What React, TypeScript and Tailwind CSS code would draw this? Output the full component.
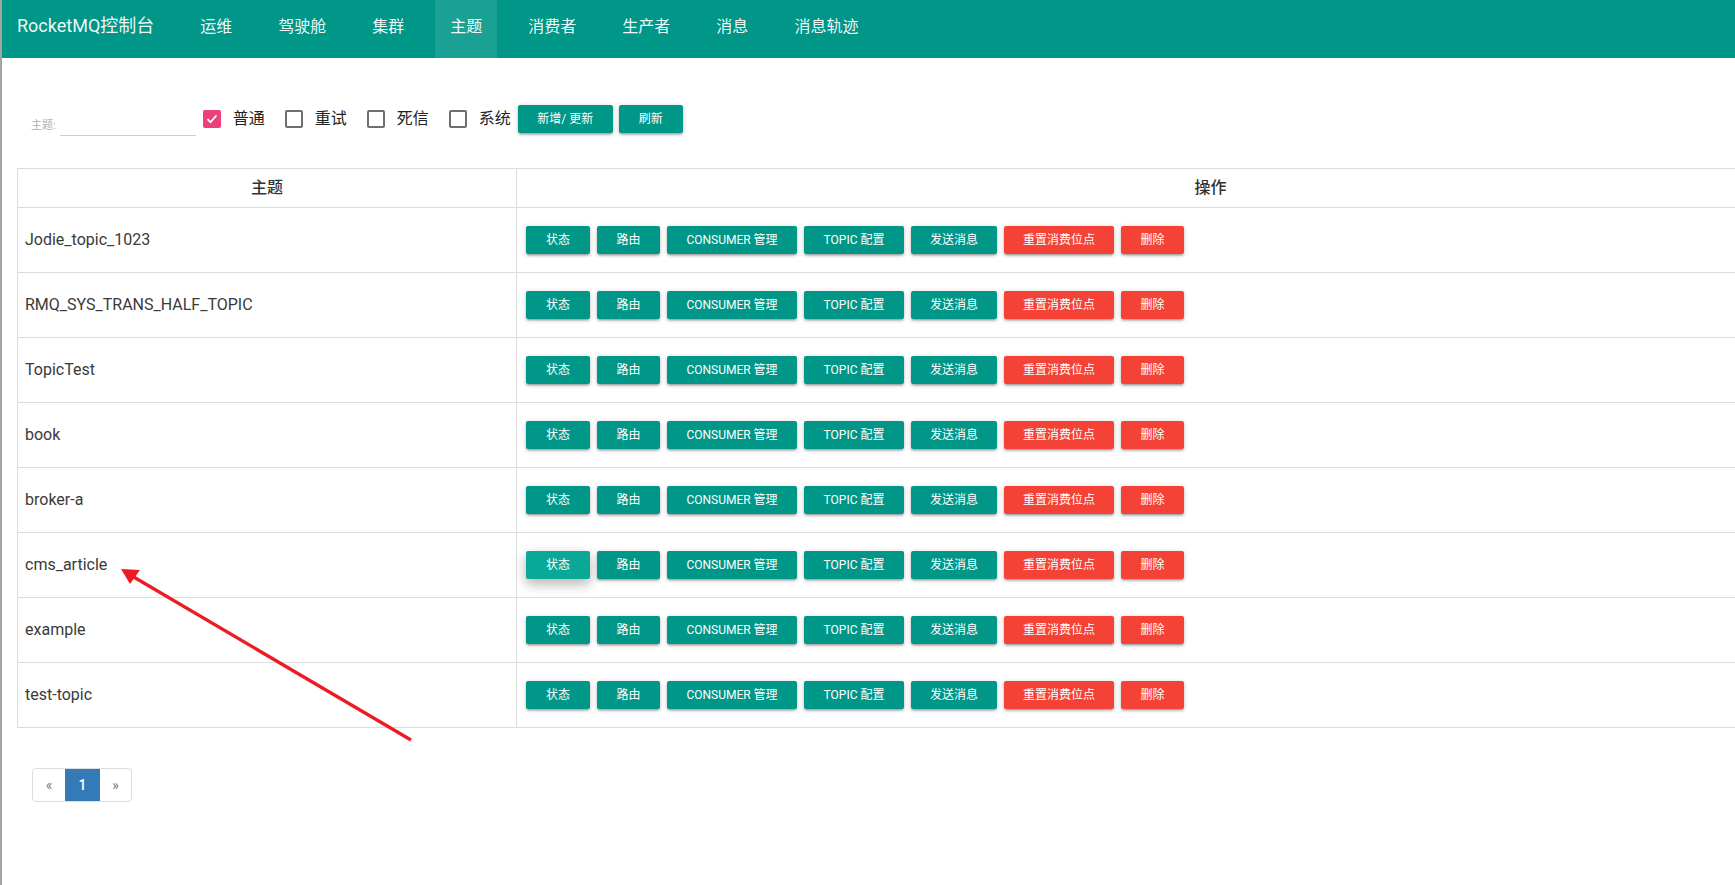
import React from 'react';

const navItems = ['运维', '驾驶舱', '集群', '主题', '消费者', '生产者', '消息', '消息轨迹'];

const topics = [
  'Jodie_topic_1023',
  'RMQ_SYS_TRANS_HALF_TOPIC',
  'TopicTest',
  'book',
  'broker-a',
  'cms_article',
  'example',
  'test-topic',
];

const actions = [
  { label: '状态', w: 'w-[64px]', red: false },
  { label: '路由', w: 'w-[63px]', red: false },
  { label: 'CONSUMER 管理', w: 'w-[130px]', red: false },
  { label: 'TOPIC 配置', w: 'w-[100px]', red: false },
  { label: '发送消息', w: 'w-[86px]', red: false },
  { label: '重置消费位点', w: 'w-[110px]', red: true },
  { label: '删除', w: 'w-[63px]', red: true },
];

const flatShadow =
  'shadow-[0_2px_2px_0_rgba(0,0,0,0.14),0_3px_1px_-2px_rgba(0,0,0,0.12),0_1px_5px_0_rgba(0,0,0,0.2)]';
const liftShadow = 'shadow-[0_5px_11px_0_rgba(0,0,0,0.18),0_4px_15px_0_rgba(0,0,0,0.15)]';

function Checkbox({ label, checked }: { label: string; checked?: boolean }) {
  return (
    <label className="flex items-center h-[28px] mr-[20px] cursor-pointer">
      {checked ? (
        <span className="w-[18px] h-[18px] rounded-[2px] bg-[#ec407a] flex items-center justify-center">
          <svg width="12" height="10" viewBox="0 0 12 10" fill="none">
            <path d="M1.5 5.2 L4.5 8.2 L10.5 1.5" stroke="white" strokeWidth="1.8" />
          </svg>
        </span>
      ) : (
        <span className="w-[18px] h-[18px] rounded-[2px] border-2 border-[#6f6f6f] bg-white" />
      )}
      <span className="ml-[12px] text-[16px] text-[#222] leading-none">{label}</span>
    </label>
  );
}

export default function App() {
  return (
    <div
      className="relative min-h-[885px] w-full overflow-hidden bg-white border-l-2 border-[#a3a3a3]"
      style={{ fontFamily: 'Roboto, "Noto Sans CJK SC", sans-serif' }}
    >
      <nav className="h-[58px] bg-[#009688] flex items-stretch">
        <div className="pl-[15px] pr-[31px] flex items-center pb-[7px] text-[18px] text-white/95">
          RocketMQ控制台
        </div>
        <ul className="flex items-stretch gap-[16px]">
          {navItems.map((item) => (
            <li
              key={item}
              className={`px-[15px] flex items-center pb-[4px] text-[16px] text-white/95 ${
                item === '主题' ? 'bg-white/10' : ''
              }`}
            >
              {item}
            </li>
          ))}
        </ul>
      </nav>

      <div className="flex items-start pl-[29px] mt-[47px]">
        <div className="flex items-end h-[31px]">
          <span className="text-[11px] leading-[11px] pb-[5px] text-[#b0b0b0]">主题:</span>
          <div className="ml-[4px] w-[136px] h-[22px] border-b border-[#cfcfcf]" />
        </div>
        <div className="flex items-center ml-[7px]">
          <Checkbox label="普通" checked />
          <Checkbox label="重试" />
          <Checkbox label="死信" />
          <Checkbox label="系统" />
        </div>
        <div className="flex items-center gap-[6px] -ml-[13px]">
          <button
            className={`h-[28px] w-[95px] rounded-[2px] bg-[#009688] text-white text-[12px] ${flatShadow}`}
          >
            新增/ 更新
          </button>
          <button
            className={`h-[28px] w-[64px] rounded-[2px] bg-[#009688] text-white text-[12px] ${flatShadow}`}
          >
            刷新
          </button>
        </div>
      </div>

      <table className="ml-[15px] mt-[32px] w-[1888px] table-fixed border-collapse border border-[#dddddd]">
        <thead>
          <tr className="h-[39px]">
            <th className="w-[499px] border border-[#dddddd] text-[16px] font-medium text-[#333]">主题</th>
            <th className="border border-[#dddddd] text-[16px] font-medium text-[#333]">操作</th>
          </tr>
        </thead>
        <tbody>
          {topics.map((topic) => (
            <tr key={topic} className="h-[65px]">
              <td className="border border-[#dddddd] pl-[7px] text-[16px] text-[#3a3a3a]">{topic}</td>
              <td className="border border-[#dddddd] pl-[9px]">
                <div className="flex items-center gap-[7px]">
                  {actions.map((a, i) => {
                    const hovered = topic === 'cms_article' && i === 0;
                    const bg = a.red ? 'bg-[#f44336]' : hovered ? 'bg-[#0aa897]' : 'bg-[#009688]';
                    return (
                      <button
                        key={a.label}
                        className={`h-[28px] ${a.w} rounded-[2px] ${bg} text-white text-[12px] ${
                          hovered ? liftShadow : flatShadow
                        }`}
                      >
                        {a.label}
                      </button>
                    );
                  })}
                </div>
              </td>
            </tr>
          ))}
        </tbody>
      </table>

      <div className="ml-[30px] mt-[40px] inline-flex h-[34px] rounded-[4px] border border-[#dddddd] overflow-hidden text-[14px]">
        <span className="w-[32px] flex items-center justify-center text-[#7a7a7a]">«</span>
        <span className="w-[35px] flex items-center justify-center bg-[#337ab7] text-white font-medium">1</span>
        <span className="w-[31px] flex items-center justify-center text-[#7a7a7a]">»</span>
      </div>

      <svg className="absolute left-0 top-0 pointer-events-none" width="500" height="800">
        <line x1="409" y1="740" x2="130" y2="576" stroke="#ec1c24" strokeWidth="3.3" />
        <polygon points="119,569 138,570 128,584" fill="#ec1c24" />
      </svg>
    </div>
  );
}
